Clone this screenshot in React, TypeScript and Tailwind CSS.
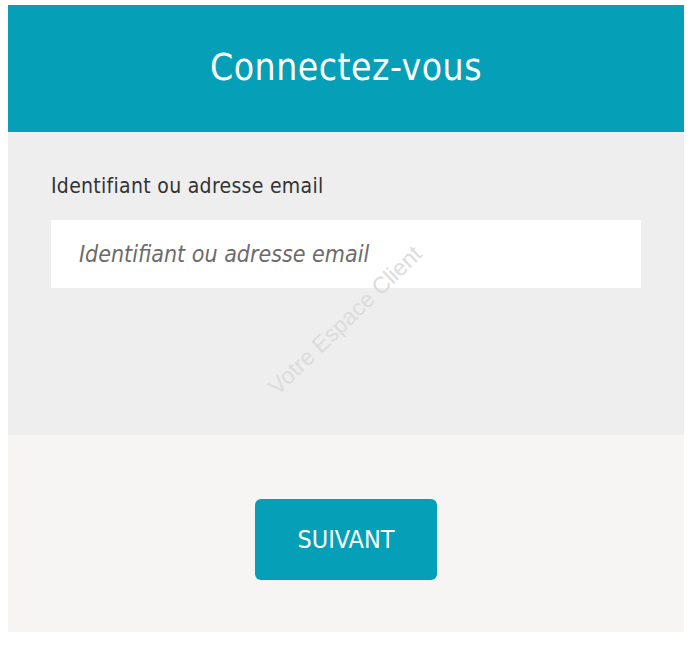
import React from "react";

export default function App() {
  return (
    <div className="w-[700px] h-[646px] bg-white pt-[5px] pl-[8px]" style={{ fontFamily: '"DejaVu Sans Condensed", "DejaVu Sans", sans-serif' }}>
      <div className="w-[676px] relative">
        <div className="h-[127px] bg-[#069fb8] flex items-center justify-center">
          <h1 className="text-white text-[37px] tracking-[0.5px] leading-none pb-[3px]" style={{ fontWeight: 300 }}>Connectez-vous</h1>
        </div>
        <div className="h-[303px] bg-[#eeeeee] pt-[44px] px-[43px]">
          <label className="block text-[21px] tracking-[0.3px] text-[#333333] leading-none">Identifiant ou adresse email</label>
          <div className="mt-[23px] h-[68px] w-[590px] bg-white flex items-center pl-[28px]">
            <span className="italic text-[23px] text-[#6b6b6b] leading-none">Identifiant ou adresse email</span>
          </div>
        </div>
        <div className="h-[197px] bg-[#f6f5f4] flex justify-center pt-[64px]">
          <button className="w-[182px] h-[81px] rounded-[6px] bg-[#069fb8] text-white text-[25px] leading-none flex items-center justify-center">SUIVANT</button>
        </div>
        <div className="absolute left-[236px] top-[298px] pointer-events-none text-[#dcdcdc] text-[23px] whitespace-nowrap -rotate-[44deg]" style={{ fontFamily: '"Liberation Sans", sans-serif' }}>
          Votre Espace Client
        </div>
      </div>
    </div>
  );
}
